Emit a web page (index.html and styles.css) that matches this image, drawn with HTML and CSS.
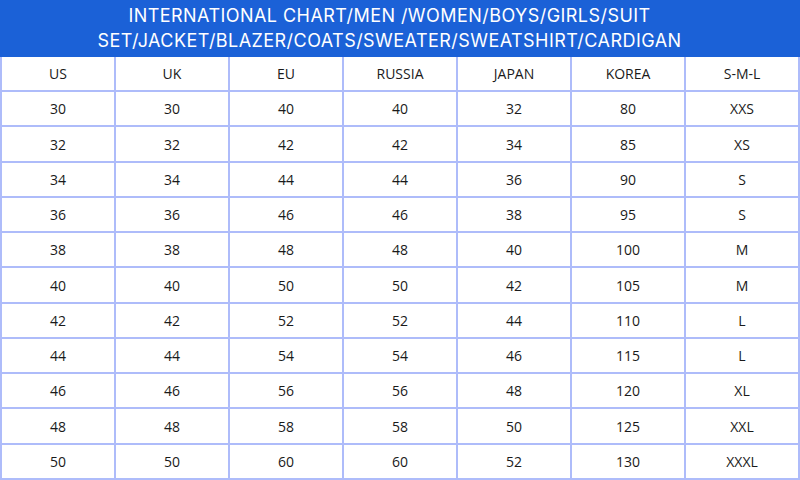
FILE: index.html
```html
<!DOCTYPE html>
<html>
<head>
<meta charset="utf-8">
<link rel="stylesheet" href="styles.css">
</head>
<body>
<div class="chart">
  <div class="title">INTERNATIONAL CHART/MEN /WOMEN/BOYS/GIRLS/SUIT<br>SET/JACKET/BLAZER/COATS/SWEATER/SWEATSHIRT/CARDIGAN</div>
  <table class="grid">
    <tr><td>US</td><td>UK</td><td>EU</td><td>RUSSIA</td><td>JAPAN</td><td>KOREA</td><td>S-M-L</td></tr>
    <tr><td>30</td><td>30</td><td>40</td><td>40</td><td>32</td><td>80</td><td>XXS</td></tr>
    <tr><td>32</td><td>32</td><td>42</td><td>42</td><td>34</td><td>85</td><td>XS</td></tr>
    <tr><td>34</td><td>34</td><td>44</td><td>44</td><td>36</td><td>90</td><td>S</td></tr>
    <tr><td>36</td><td>36</td><td>46</td><td>46</td><td>38</td><td>95</td><td>S</td></tr>
    <tr><td>38</td><td>38</td><td>48</td><td>48</td><td>40</td><td>100</td><td>M</td></tr>
    <tr><td>40</td><td>40</td><td>50</td><td>50</td><td>42</td><td>105</td><td>M</td></tr>
    <tr><td>42</td><td>42</td><td>52</td><td>52</td><td>44</td><td>110</td><td>L</td></tr>
    <tr><td>44</td><td>44</td><td>54</td><td>54</td><td>46</td><td>115</td><td>L</td></tr>
    <tr><td>46</td><td>46</td><td>56</td><td>56</td><td>48</td><td>120</td><td>XL</td></tr>
    <tr><td>48</td><td>48</td><td>58</td><td>58</td><td>50</td><td>125</td><td>XXL</td></tr>
    <tr><td>50</td><td>50</td><td>60</td><td>60</td><td>52</td><td>130</td><td>XXXL</td></tr>
  </table>
</div>
</body>
</html>
```
FILE: styles.css
```css
html, body {
  margin: 0;
  padding: 0;
  background: #ffffff;
}
.chart {
  width: 800px;
  height: 480px;
  display: flex;
  flex-direction: column;
  font-family: "Open Sans", "Liberation Sans", sans-serif;
}
.title {
  height: 57px;
  background: #1b61d7;
  color: #ffffff;
  font-family: Inter, "Open Sans", sans-serif;
  font-size: 18px;
  line-height: 25px;
  text-align: center;
  padding: 3px 21px 0 0;
  box-sizing: border-box;
  letter-spacing: 0.45px;
}
.grid {
  width: 800px;
  height: 423px;
  border-collapse: collapse;
  table-layout: fixed;
}
.grid td {
  border: 2px solid #aebcfa;
  text-align: center;
  font-size: 14px;
  color: #1a1a1a;
  padding: 0;
  height: 33px;
}
.grid tr:first-child td {
  border-top: none;
}
```
